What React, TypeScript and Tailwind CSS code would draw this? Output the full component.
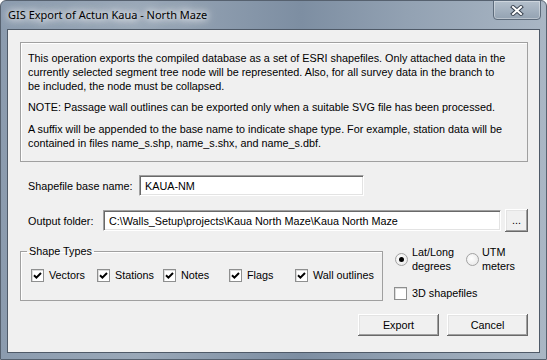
import React from 'react'

const sunken =
    'border border-t-[#a0a0a0] border-l-[#a0a0a0] border-r-white border-b-white shadow-[inset_1px_1px_0_#696969,inset_-1px_-1px_0_#e3e3e3] bg-white'
const raised =
    'bg-[#f0f0f0] shadow-[inset_-1px_-1px_0_#696969,inset_1px_1px_0_#ffffff,inset_-2px_-2px_0_#a0a0a0,inset_2px_2px_0_#e3e3e3]'

function CheckBox({ checked }: { checked: boolean }) {
    return (
        <span className="flex h-[13px] w-[13px] shrink-0 items-center justify-center border border-[#8e8f8f] bg-white shadow-[inset_1px_1px_0_#dcdcdc]">
            {checked && (
                <svg width="9" height="9" viewBox="0 0 9 9">
                    <path d="M1 4.3 L3.4 6.7 L8 2" fill="none" stroke="#000" strokeWidth="2" />
                </svg>
            )}
        </span>
    )
}

function Radio({ checked }: { checked: boolean }) {
    return (
        <span className="flex h-[13px] w-[13px] shrink-0 items-center justify-center rounded-full border border-[#a2a2a2] bg-[radial-gradient(circle_at_40%_40%,#ffffff,#e4e4e4)]">
            {checked && <span className="h-[5px] w-[5px] rounded-full bg-black" />}
        </span>
    )
}

function Check({ label, checked = true }: { label: string; checked?: boolean }) {
    return (
        <div className="flex h-[14px] w-[66px] items-center gap-[5px] whitespace-nowrap">
            <CheckBox checked={checked} />
            <span>{label}</span>
        </div>
    )
}

export default function App() {
    return (
        <div className="h-[360px] w-[547px] font-['Liberation_Sans',Arial,sans-serif] text-[10.8px] leading-[14px] text-black">
            <div className="flex h-[360px] w-[547px] flex-col rounded-t-[6px] border border-[#56616f] bg-[linear-gradient(90deg,#8b9bae_0%,#9aa8b8_25%,#7d8ea2_55%,#93a2b3_75%,#a9b6c4_100%)]">
                {/* title bar */}
                <div className="flex h-[28px] items-center justify-between">
                    <span className="pl-[7px] font-['Noto_Sans',sans-serif] text-[11px] [text-shadow:0_0_6px_#fff,0_0_10px_#fff,0_0_14px_#fff]">
                        GIS Export of Actun Kaua - North Maze
                    </span>
                    <div className="-mt-[1px] mr-[5px] flex h-[20px] w-[48px] items-center justify-center self-start rounded-b-[4px] border border-[#5d6b7b] bg-[linear-gradient(180deg,#b4c0cc,#93a2b2)] shadow-[inset_0_0_0_1px_rgba(255,255,255,0.35)]">
                        <svg width="14" height="11" viewBox="0 0 14 11">
                            <path d="M3 2 L11 9 M11 2 L3 9" stroke="#3b4552" strokeWidth="4" strokeLinecap="square" />
                            <path d="M3 2 L11 9 M11 2 L3 9" stroke="#ffffff" strokeWidth="2" strokeLinecap="square" />
                        </svg>
                    </div>
                </div>

                {/* client area */}
                <div className="ml-[6px] h-[324px] w-[533px] border border-[#4f5a68] bg-[#f0f0f0]">
                    <div className="ml-[12px] mt-[12px] h-[120px] w-[508px] border border-[#a0a0a0] pl-[7px] pt-[8px] shadow-[inset_1px_1px_0_#ffffff]">
                        <p>
                            This operation exports the compiled database as a set of ESRI shapefiles. Only attached data in the
                            <br />
                            currently selected segment tree node will be represented. Also, for all survey data in the branch to
                            <br />
                            be included, the node must be collapsed.
                        </p>
                        <p className="mt-[7px]">
                            NOTE: Passage wall outlines can be exported only when a suitable SVG file has been processed.
                        </p>
                        <p className="mt-[8px]">
                            A suffix will be appended to the base name to indicate shape type. For example, station data will be
                            <br />
                            contained in files name_s.shp, name_s.shx, and name_s.dbf.
                        </p>
                    </div>

                    <div className="ml-[20px] mt-[13px] flex h-[21px] items-center">
                        <span className="w-[111px]">Shapefile base name:</span>
                        <div className={`flex h-[21px] w-[225px] items-center pl-[5px] ${sunken}`}>KAUA-NM</div>
                    </div>

                    <div className="ml-[20px] mt-[13px] flex h-[23px] items-center">
                        <span className="w-[75px]">Output folder:</span>
                        <div className={`flex h-[21px] w-[398px] items-center pl-[5px] ${sunken}`}>
                            C:\Walls_Setup\projects\Kaua North Maze\Kaua North Maze
                        </div>
                        <div className={`ml-[4px] flex h-[23px] w-[23px] items-center justify-center pb-[2px] ${raised}`}>...</div>
                    </div>

                    <div className="mt-[12px] flex">
                        <fieldset className="ml-[12px] h-[57px] w-[363px] border border-[#a0a0a0] shadow-[inset_1px_1px_0_#ffffff]">
                            <legend className="ml-[6px] px-[2px] leading-[14px]">Shape Types</legend>
                            <div className="mt-[10px] flex pl-[10px]">
                                <Check label="Vectors" />
                                <Check label="Stations" />
                                <Check label="Notes" />
                                <Check label="Flags" />
                                <Check label="Wall outlines" />
                            </div>
                        </fieldset>

                        <div className="ml-[12px] flex flex-col pt-[1px]">
                            <div className="flex">
                                <div className="flex w-[71px] items-center gap-[4px]">
                                    <Radio checked />
                                    <span>
                                        Lat/Long
                                        <br />
                                        degrees
                                    </span>
                                </div>
                                <div className="flex items-center gap-[3px]">
                                    <Radio checked={false} />
                                    <span>
                                        UTM
                                        <br />
                                        meters
                                    </span>
                                </div>
                            </div>
                            <div className="-ml-[1px] mt-[13px] flex h-[14px] items-center gap-[5px]">
                                <CheckBox checked={false} />
                                <span>3D shapefiles</span>
                            </div>
                        </div>
                    </div>

                    <div className="mt-[13px] flex justify-end gap-[8px] pr-[11px]">
                        <div className={`flex h-[22px] w-[81px] items-center justify-center ${raised}`}>Export</div>
                        <div className={`flex h-[22px] w-[81px] items-center justify-center ${raised}`}>Cancel</div>
                    </div>
                </div>
            </div>
        </div>
    )
}
